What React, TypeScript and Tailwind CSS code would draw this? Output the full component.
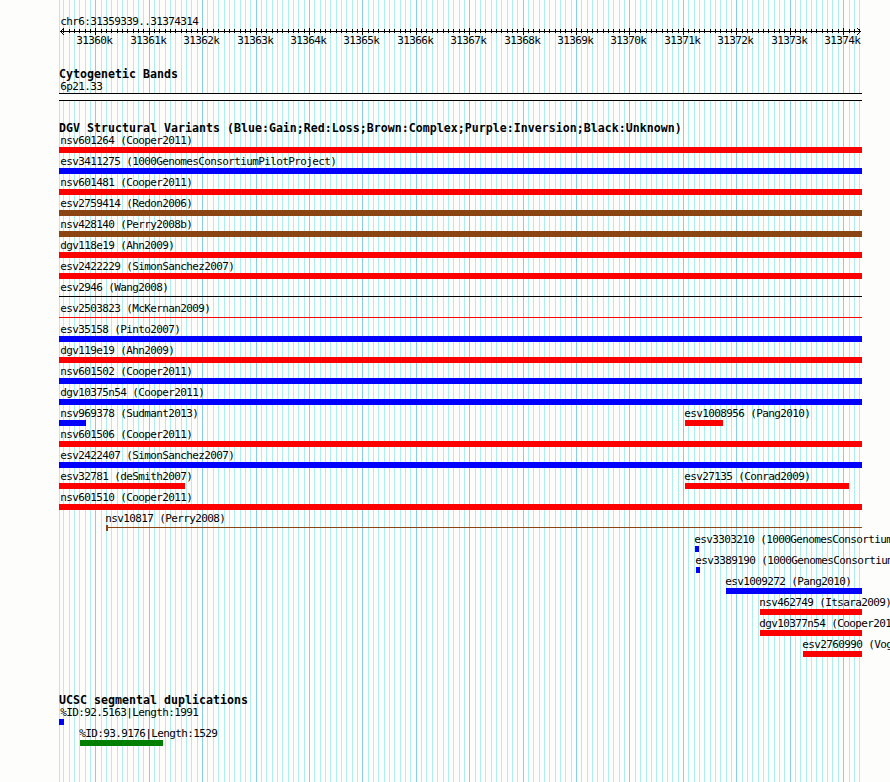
const LEFT = 59;
const RIGHT = 862;

type Feature = { label: string; start: number; end: number; fill: string; shape?: "line" | "open" };
type Row = Feature[];

const RED = "bg-[#ff0000]";
const BLUE = "bg-[#0000ff]";
const BROWN = "bg-[#8b4513]";
const BLACK = "bg-black";
const GREEN = "bg-[#008000]";

const full = (label: string, fill: string, shape?: "line"): Row => [{ label, start: LEFT, end: RIGHT, fill, shape }];

const variants: Row[] = [
  full("nsv601264 (Cooper2011)", RED),
  full("esv3411275 (1000GenomesConsortiumPilotProject)", BLUE),
  full("nsv601481 (Cooper2011)", RED),
  full("esv2759414 (Redon2006)", BROWN),
  full("nsv428140 (Perry2008b)", BROWN),
  full("dgv118e19 (Ahn2009)", RED),
  full("esv2422229 (SimonSanchez2007)", RED),
  full("esv2946 (Wang2008)", BLACK, "line"),
  full("esv2503823 (McKernan2009)", RED, "line"),
  full("esv35158 (Pinto2007)", BLUE),
  full("dgv119e19 (Ahn2009)", RED),
  full("nsv601502 (Cooper2011)", BLUE),
  full("dgv10375n54 (Cooper2011)", BLUE),
  [
    { label: "nsv969378 (Sudmant2013)", start: LEFT, end: 86, fill: BLUE },
    { label: "esv1008956 (Pang2010)", start: 685, end: 723, fill: RED },
  ],
  full("nsv601506 (Cooper2011)", RED),
  full("esv2422407 (SimonSanchez2007)", BLUE),
  [
    { label: "esv32781 (deSmith2007)", start: LEFT, end: 185, fill: RED },
    { label: "esv27135 (Conrad2009)", start: 685, end: 849, fill: RED },
  ],
  full("nsv601510 (Cooper2011)", RED),
  [{ label: "nsv10817 (Perry2008)", start: 106, end: RIGHT, fill: BROWN, shape: "open" }],
  [{ label: "esv3303210 (1000GenomesConsortiumPilotProject)", start: 695, end: 699, fill: BLUE }],
  [{ label: "esv3389190 (1000GenomesConsortiumPilotProject)", start: 696, end: 700, fill: BLUE }],
  [{ label: "esv1009272 (Pang2010)", start: 726, end: RIGHT, fill: BLUE }],
  [{ label: "nsv462749 (Itsara2009)", start: 760, end: RIGHT, fill: RED }],
  [{ label: "dgv10377n54 (Cooper2011)", start: 760, end: RIGHT, fill: RED }],
  [{ label: "esv2760990 (Vogler2010)", start: 803, end: RIGHT, fill: RED }],
];

const duplications: Row[] = [
  [{ label: "%ID:92.5163|Length:1991", start: LEFT, end: 64, fill: BLUE }],
  [{ label: "%ID:93.9176|Length:1529", start: 80, end: 163, fill: GREEN }],
];

const ticks = Array.from({ length: 150 }, (_, i) => {
  const k = i - 6;
  return { x: Math.round(95.3 + 5.3419 * k), major: k % 10 === 0, kb: 31360 + k / 10 };
}).filter((t) => t.x < 861);

function Grid() {
  return (
    <svg className="absolute inset-0" width="890" height="782" shapeRendering="crispEdges">
      <rect x={LEFT} y="0" width="1" height="782" fill="#afeeee" />
      {ticks.map((t) => (
        <rect key={t.x} x={t.x} y="0" width="1" height="782" fill={t.major ? "#87ceeb" : "#afeeee"} />
      ))}
    </svg>
  );
}

function Ruler() {
  return (
    <svg className="block h-[24px] w-[890px]" viewBox="0 25 890 24" shapeRendering="crispEdges">
      <rect x="60" y="31" width="801" height="1" />
      {ticks.map((t) => (
        <rect key={t.x} x={t.x} y={t.major ? 28 : 29} width="1" height={t.major ? 7 : 4} />
      ))}
      {[1, 2, 3].map((d) => (
        <g key={d}>
          <rect x={60 + d} y={31 - d} width="1" height="1" />
          <rect x={60 + d} y={31 + d} width="1" height="1" />
          <rect x={860 - d} y={31 - d} width="1" height="1" />
          <rect x={860 - d} y={31 + d} width="1" height="1" />
        </g>
      ))}
      {ticks
        .filter((t) => t.major)
        .map((t) => (
          <text key={t.x} x={t.x - 18.7} y="44" className="text-[11px] tracking-[-0.622px]">
            {t.kb}k
          </text>
        ))}
    </svg>
  );
}

function Glyph({ f }: { f: Feature }) {
  if (f.shape === "line") return <div className="flex h-[6px] pt-[2px]"><div className={`h-px w-full ${f.fill}`} /></div>;
  if (f.shape === "open")
    return (
      <div className="flex h-[6px]">
        <div className={`h-[6px] w-[2px] ${f.fill}`} />
        <div className={`mt-[2px] h-px grow ${f.fill}`} />
      </div>
    );
  return <div className={`h-[6px] ${f.fill}`} />;
}

function TrackRow({ row }: { row: Row }) {
  return (
    <div className="flex h-[21px]">
      {row.map((f, i) => (
        <div
          key={f.label}
          className="shrink-0"
          style={{ marginLeft: f.start - (i ? row[i - 1].end : 0), width: f.end - f.start }}
        >
          <div className={`h-[12px] leading-[12px] whitespace-nowrap ${f.start === LEFT ? "ml-[1.25px]" : "-ml-[0.75px]"}`}>
            {f.label}
          </div>
          <Glyph f={f} />
        </div>
      ))}
    </div>
  );
}

function Title({ children }: { children: string }) {
  return (
    <h2 className="ml-[59px] h-[12px] text-[11.6px] leading-[10px] font-bold tracking-[0.016px] whitespace-nowrap">
      {children}
    </h2>
  );
}

export default function App() {
  return (
    <main className="relative h-[782px] w-[890px] overflow-hidden bg-[#fdfefc] font-['DejaVu_Sans_Mono',monospace] text-[11px] tracking-[-0.622px] text-black">
      <Grid />
      <div className="relative pt-[16px]">
        <div className="ml-[60.25px] h-[9px] leading-[12px]">chr6:31359339..31374314</div>
        <Ruler />
        <section className="pt-[20px]">
          <Title>Cytogenetic Bands</Title>
          <div className="ml-[60.25px] h-[12px] leading-[12px]">6p21.33</div>
          <div className="ml-[59px] h-[8px] w-[803px] border-y border-black bg-[#fdfefc]" />
        </section>
        <section className="pt-[22px]">
          <Title>DGV Structural Variants (Blue:Gain;Red:Loss;Brown:Complex;Purple:Inversion;Black:Unknown)</Title>
          {variants.map((row) => (
            <TrackRow key={row[0].label} row={row} />
          ))}
        </section>
        <section className="pt-[35px]">
          <Title>UCSC segmental duplications</Title>
          {duplications.map((row) => (
            <TrackRow key={row[0].label} row={row} />
          ))}
        </section>
      </div>
    </main>
  );
}
